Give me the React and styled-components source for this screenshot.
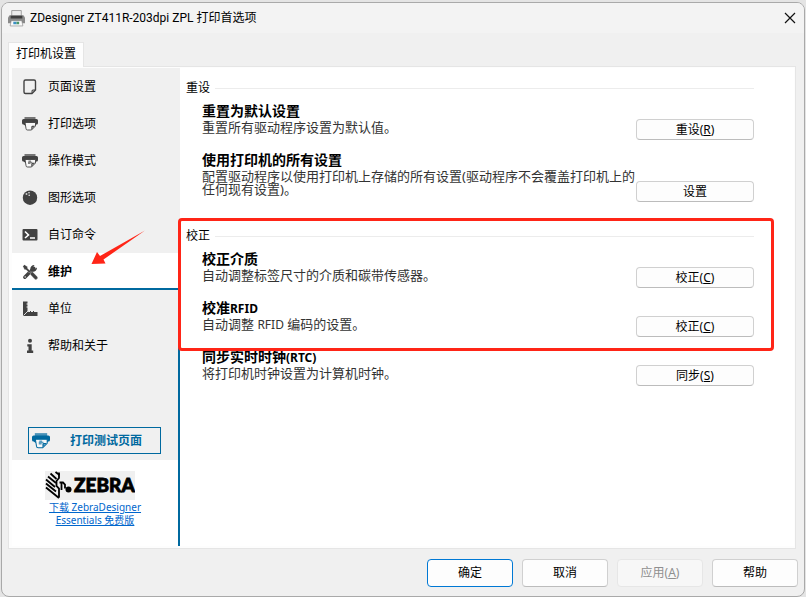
import * as React from "react";
import styled, { createGlobalStyle, css } from "styled-components";

const colors = {
  backdrop: "#e4e4e4",
  window: "#f0f0f0",
  titleBar: "#f3f3f3",
  page: "#fdfdfd",
  line: "#e5e5e5",
  icon: "#424242",
  brand: "#00699f",
  link: "#0066cc",
  mark: "#ff2517",
};

const GlobalStyle = createGlobalStyle`
  * {
    box-sizing: border-box;
  }
  body {
    margin: 0;
    background-color: ${colors.backdrop};
    color: #000;
    font-family: "Noto Sans", "Noto Sans CJK SC", sans-serif;
    font-size: 12px;
    line-height: 16px;
  }
  button {
    padding: 0;
    color: inherit;
    font: inherit;
  }
  h2, h3, p {
    margin: 0;
    font-size: inherit;
    font-weight: normal;
  }
`;

const Dialog = styled.main`
  position: relative;
  display: flex;
  flex-direction: column;
  min-height: calc(100vh - 2px);
  margin: 2px 1px 0;
  border: 1px solid #a9a9a9;
  border-radius: 8px;
  background-color: ${colors.window};
  overflow: hidden;
`;
const TitleBar = styled.header`
  display: flex;
  align-items: center;
  gap: 5px;
  height: 30px;
  padding: 0 6px;
  background-color: ${colors.titleBar};
`;
const Title = styled.h1`
  flex: 1;
  margin: 0;
  font-family: Roboto, "Noto Sans CJK SC", sans-serif;
  font-size: 12px;
  font-weight: normal;
`;
const CloseButton = styled.button`
  display: flex;
  padding: 2px;
  border: 0;
  background: none;
`;

const TabList = styled.div`
  display: flex;
  padding: 9px 6px 0;
`;
const Tab = styled.button`
  height: 25px;
  padding: 0 7px 2px;
  margin-bottom: -1px;
  border: 1px solid ${colors.line};
  border-bottom: 0;
  background-color: ${colors.page};
  z-index: 1;
`;
const TabPage = styled.div`
  flex: 1;
  display: flex;
  margin: 0 8px 0 6px;
  padding: 1px 1px 2px 3px;
  border: 1px solid ${colors.line};
  background-color: ${colors.page};
`;

const Sidebar = styled.aside`
  display: flex;
  flex-direction: column;
  width: 168px;
  background-color: #fff;
`;
const Nav = styled.nav`
  display: flex;
  flex-direction: column;
`;
const NavItem = styled.button`
  display: flex;
  align-items: center;
  gap: 10px;
  height: 37px;
  padding: 0 10px;
  border: 0;
  background-color: ${colors.window};
  text-align: left;
  ${({ $active }) =>
    $active &&
    css`
      padding-top: 2px;
      border-bottom: 2px solid ${colors.brand};
      background-color: #fff;
      font-weight: 700;
    `}
  ${({ $ruled }) =>
    $ruled &&
    css`
      border-right: 2px solid ${colors.brand};
    `}
`;
const TestArea = styled.div`
  padding: 63px 0 6px 16px;
  border-right: 2px solid ${colors.brand};
  background-color: ${colors.window};
`;
const TestButton = styled.button`
  display: flex;
  align-items: center;
  width: 133px;
  height: 27px;
  padding: 0 18px 0 3px;
  border: 1px solid ${colors.brand};
  background-color: ${colors.window};
  color: ${colors.brand};
  font-weight: 700;
`;
const TestLabel = styled.span`
  flex: 1;
  text-align: right;
`;
const Brand = styled.div`
  flex: 1;
  display: flex;
  flex-direction: column;
  align-items: center;
  padding-top: 11px;
  border-right: 2px solid ${colors.brand};
`;
const Logo = styled.svg`
  margin-right: 10px;
  background-color: ${colors.window};
`;
const BrandLink = styled.a`
  width: 100px;
  margin-top: 1px;
  color: ${colors.link};
  font-size: 10px;
  line-height: 13px;
  text-align: center;
`;

const Content = styled.div`
  flex: 1;
  display: flex;
  flex-direction: column;
  gap: 26px;
  padding: 12px 40px 0 6px;
  background-color: #fff;
`;
const SectionTitle = styled.h2`
  display: flex;
  align-items: center;
  gap: 5px;
  margin-bottom: 6px;
  &::after {
    content: "";
    flex: 1;
    height: 1px;
    background-color: #ececec;
  }
`;
const Rows = styled.div`
  display: flex;
  flex-direction: column;
  gap: 11px;
  padding-left: 16px;
`;
const Row = styled.div`
  display: flex;
  align-items: flex-end;
`;
const RowText = styled.div`
  flex: 1;
  padding-bottom: 6px;
`;
const RowTitle = styled.h3`
  margin-bottom: 1px;
  font-size: 14px;
  font-weight: 700;
  line-height: 18px;
`;
const Latin = styled.span`
  font-size: 12px;
  line-height: 1;
`;
const RowNote = styled.p`
  color: #333;
  font-size: 13px;
  line-height: 13px;
`;

const PushButton = styled.button`
  border: 1px solid #d0d0d0;
  border-bottom-color: #bcbcbc;
  border-radius: 4px;
  background-color: #fdfdfd;
`;
const RowButton = styled(PushButton)`
  width: 118px;
  height: 21px;
`;
const Footer = styled.footer`
  display: flex;
  justify-content: flex-end;
  gap: 9px;
  padding: 10px 6px 9px;
`;
const FooterButton = styled(PushButton)`
  width: 86px;
  height: 28px;
  ${({ $primary }) =>
    $primary &&
    css`
      border-color: #0078d4;
    `}
  &:disabled {
    border-color: #e6e6e6;
    background-color: #f7f7f7;
    color: #8f8f8f;
  }
`;

const MarkBox = styled.div`
  position: absolute;
  top: 215px;
  left: 176px;
  right: 30px;
  height: 133px;
  border: 3px solid ${colors.mark};
  border-radius: 4px;
  pointer-events: none;
`;
const MarkArrow = styled.svg`
  position: absolute;
  top: 226px;
  left: 88px;
  pointer-events: none;
`;

function Icon({ children, size = 16 }) {
  return (
    <svg width={size} height={size} viewBox="0 0 16 16" aria-hidden="true">
      {children}
    </svg>
  );
}

function PageIcon() {
  return (
    <Icon>
      <path
        d="M3.500 1h8.500a1.500 1.500 0 0 1 1.500 1.500v8.500l-3.500 3.500H3.500A1.500 1.500 0 0 1 2 13V2.500A1.500 1.500 0 0 1 3.500 1z"
        fill="none"
        stroke={colors.icon}
        strokeWidth="1.400"
      />
      <path d="M13.500 10.500H11q-1.500 0-1.500 1.500v2.500z" fill={colors.icon} />
      <path d="M12 11.500h-.8q-.7 0-.7.700v.8z" fill="#eee" />
    </Icon>
  );
}

function PrinterIcon({ color = colors.icon, detail, size }) {
  return (
    <Icon size={size}>
      <path d="M2.500 1h11v3h-11z" fill={color} opacity=".7" />
      <path
        d="M1.500 3h13a1.500 1.500 0 0 1 1.500 1.500V7q0 1.500-1.500 1.500L13 9.500H3L1.500 8.500Q0 8.500 0 7V4.500A1.500 1.500 0 0 1 1.500 3z"
        fill={color}
      />
      <path
        d="M3 6.500h10.500V10L9.500 14H5.500Q4 14 4 12.500z"
        fill="#f8f8f8"
        stroke={color}
        strokeWidth=".9"
      />
      <path d="M13 9.800h-2.500q-1.200 0-1.200 1.200v3z" fill={color} />
      <path d="M11.500 10.800h-.4q-.7 0-.7.600v.6z" fill="#f8f8f8" />
      {detail && (
        <path
          d="M6.500 7.500H9v1.200h1.200V10H8.500v1H6V8.700h.5z"
          fill={color}
          opacity=".65"
        />
      )}
    </Icon>
  );
}

function BallIcon() {
  return (
    <Icon>
      <circle cx="8" cy="7.700" r="7.200" fill={colors.icon} />
      <circle cx="7" cy="2.800" r=".8" fill="#eee" />
      <circle cx="4.500" cy="4" r="1" fill="#ccc" />
      <circle cx="7.200" cy="5.200" r=".8" fill="#eee" />
    </Icon>
  );
}

function CommandIcon() {
  return (
    <Icon>
      <rect x=".5" y="2" width="15" height="11.500" rx="1" fill={colors.icon} />
      <path
        d="M3 4.500L6.500 8 3 11M8 11h5"
        fill="none"
        stroke="#fff"
        strokeWidth="1.600"
      />
    </Icon>
  );
}

function ToolsIcon() {
  return (
    <Icon>
      <path
        d="M2.800 13.200l9-9"
        stroke={colors.icon}
        strokeWidth="3.400"
        strokeLinecap="round"
      />
      <path
        d="M15 3.500l-2.300 1.500-1.700-1.500L12.500 1A4 4 0 0 0 8.300 5.500l2.200 2.200A4 4 0 0 0 15 3.500z"
        fill={colors.icon}
      />
      <path
        d="M.8 2.300L2.500.7l3 2v1.600l3.300 3.300-1.400 1.400-3.300-3.300H2.600zM9 8.300l1.500-.5 4.600 4.600a1.700 1.700 0 0 1-2.600 2.600L8.300 10.500z"
        fill={colors.icon}
        stroke="#fff"
        strokeWidth=".3"
      />
      <circle cx="3.200" cy="12.900" r=".7" fill="#fff" />
    </Icon>
  );
}

function RulerIcon() {
  return (
    <Icon>
      <path
        d="M1 .5h4.500v2h-1v1h1v2h-1v1h1v3.500l1 1H8v-1h1v1h2v-1h1v1h3.500V15H1z"
        fill={colors.icon}
      />
      <path d="M1.500 14.500l4.500-4.500" stroke="#eee" strokeWidth=".9" />
    </Icon>
  );
}

function InfoIcon() {
  return (
    <Icon>
      <circle cx="8" cy="2.800" r="2" fill={colors.icon} />
      <path
        d="M5.300 6.200h4.400v6.300h1.500V15H5v-2.500h1.500V8.500H5.300z"
        fill={colors.icon}
      />
    </Icon>
  );
}

function DeviceIcon() {
  return (
    <Icon size={17}>
      <path d="M3.500.5h9v6h-9z" fill="#ececec" stroke="#888" strokeWidth=".7" />
      <path d="M1.500 5h13l1.500 2v5.500H0V7z" fill="#8a8a8a" />
      <path d="M2.500 5.500h11V8h-11z" fill="#3f3f3f" />
      <path d="M3 10h10l1 5H2z" fill="#fafafa" stroke="#888" strokeWidth=".6" />
      <path d="M5 11h3v2.500H5z" fill="#3a8fc4" />
      <path d="M8 11h2.500v2.500H8z" fill="#49966a" />
    </Icon>
  );
}

function ZebraLogo() {
  return (
    <Logo width="90" height="29" viewBox="0 0 90 29" role="img" aria-label="ZEBRA">
      <g fill="none" stroke="#000" strokeWidth="1.800">
        <path d="M1 16.500l13 10.500M1 12.500l10 8M1 8.500l9 7.500M3 5.500l8 6.500M5.500 2.500l6 5.500M10.500 1l4 3" />
        <path d="M14 1.500v5.500l-2.500 3v5l2.500 2.500v9" />
        <path d="M14.500 11.500h3.500l2 2v4M16.500 12v7" />
      </g>
      <circle cx="23.500" cy="18.500" r="3" />
      <text
        x="29"
        y="21"
        fontFamily="Lato, sans-serif"
        fontSize="19"
        fontWeight="900"
        stroke="#000"
        strokeWidth=".8"
      >
        ZEBRA
      </text>
    </Logo>
  );
}

const navItems = [
  { label: "页面设置", icon: <PageIcon /> },
  { label: "打印选项", icon: <PrinterIcon /> },
  { label: "操作模式", icon: <PrinterIcon detail /> },
  { label: "图形选项", icon: <BallIcon /> },
  { label: "自订命令", icon: <CommandIcon /> },
  { label: "维护", icon: <ToolsIcon />, active: true },
  { label: "单位", icon: <RulerIcon />, ruled: true },
  { label: "帮助和关于", icon: <InfoIcon />, ruled: true },
];

const sections = [
  {
    title: "重设",
    rows: [
      {
        title: "重置为默认设置",
        note: "重置所有驱动程序设置为默认值。",
        action: "重设",
        accessKey: "R",
      },
      {
        title: "使用打印机的所有设置",
        note: "配置驱动程序以使用打印机上存储的所有设置(驱动程序不会覆盖打印机上的任何现有设置)。",
        action: "设置",
      },
    ],
  },
  {
    title: "校正",
    rows: [
      {
        title: "校正介质",
        note: "自动调整标签尺寸的介质和碳带传感器。",
        action: "校正",
        accessKey: "C",
      },
      {
        title: "校准",
        latin: "RFID",
        note: (
          <>
            自动调整 <Latin>RFID</Latin> 编码的设置。
          </>
        ),
        action: "校正",
        accessKey: "C",
      },
      {
        title: "同步实时时钟",
        latin: "(RTC)",
        note: "将打印机时钟设置为计算机时钟。",
        action: "同步",
        accessKey: "S",
      },
    ],
  },
];

function Caption({ label, accessKey }) {
  return (
    <>
      {label}
      {accessKey && (
        <>
          (<u>{accessKey}</u>)
        </>
      )}
    </>
  );
}

function Section({ title, rows }) {
  return (
    <section>
      <SectionTitle>{title}</SectionTitle>
      <Rows>
        {rows.map((row) => (
          <Row key={row.title}>
            <RowText>
              <RowTitle>
                {row.title}
                {row.latin && <Latin>{row.latin}</Latin>}
              </RowTitle>
              <RowNote>{row.note}</RowNote>
            </RowText>
            <RowButton type="button">
              <Caption label={row.action} accessKey={row.accessKey} />
            </RowButton>
          </Row>
        ))}
      </Rows>
    </section>
  );
}

function App() {
  return (
    <>
      <GlobalStyle />
      <Dialog>
        <TitleBar>
          <DeviceIcon />
          <Title>ZDesigner ZT411R-203dpi ZPL 打印首选项</Title>
          <CloseButton type="button" aria-label="关闭">
            <svg width="12" height="12" viewBox="0 0 12 12">
              <path d="M1 1l10 10M11 1L1 11" stroke="#111" strokeWidth="1.200" />
            </svg>
          </CloseButton>
        </TitleBar>
        <TabList role="tablist">
          <Tab type="button" role="tab" aria-selected="true">
            打印机设置
          </Tab>
        </TabList>
        <TabPage role="tabpanel">
          <Sidebar>
            <Nav>
              {navItems.map(({ label, icon, active, ruled }) => (
                <NavItem key={label} type="button" $active={active} $ruled={ruled}>
                  {icon}
                  {label}
                </NavItem>
              ))}
            </Nav>
            <TestArea>
              <TestButton type="button">
                <PrinterIcon color={colors.brand} detail size={18} />
                <TestLabel>打印测试页面</TestLabel>
              </TestButton>
            </TestArea>
            <Brand>
              <ZebraLogo />
              <BrandLink href="#download">
                下载 ZebraDesigner Essentials 免费版
              </BrandLink>
            </Brand>
          </Sidebar>
          <Content>
            {sections.map((section) => (
              <Section key={section.title} {...section} />
            ))}
          </Content>
        </TabPage>
        <Footer>
          <FooterButton type="button" $primary>
            确定
          </FooterButton>
          <FooterButton type="button">取消</FooterButton>
          <FooterButton type="button" disabled>
            <Caption label="应用" accessKey="A" />
          </FooterButton>
          <FooterButton type="button">帮助</FooterButton>
        </Footer>
        <MarkBox />
        <MarkArrow width="56" height="40" viewBox="0 0 56 40">
          <path
            d="M55 1.500L13.500 30.500l2 4L1.500 35l5.500-12 3 4z"
            fill={colors.mark}
          />
        </MarkArrow>
      </Dialog>
    </>
  );
}

export default App;
